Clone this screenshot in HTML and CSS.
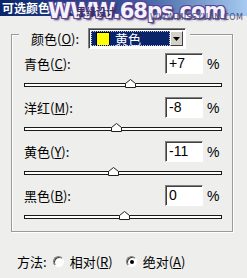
FILE: index.html
```html
<!DOCTYPE html>
<html>
<head>
<meta charset="utf-8">
<link rel="stylesheet" href="styles.css">
</head>
<body>
<div class="window">
  <div class="titlebar"><span class="title">可选颜色选项</span></div>
  <div class="wm wm-big">WWW.68ps.com</div>
  <div class="wm wm-cn">思缘设计</div>
  <div class="wm wm-small">WWW.MISSYUAN.COM</div>

  <div class="group">
    <div class="legend">
      <span class="lbl legend-lbl">颜色(<u>O</u>):</span>
      <div class="combo">
        <div class="combo-sel"><span class="swatch"></span><span class="combo-text">黄色</span></div>
        <div class="combo-btn"><svg width="7" height="4" viewBox="0 0 7 4"><polygon points="0,0 7,0 3.5,4" fill="#000"/></svg></div>
      </div>
    </div>

    <div class="row">
      <div class="line"><span class="lbl">青色(<u>C</u>):</span><span class="field">+7</span><span class="pct">%</span></div>
      <div class="track"><svg class="thumb" style="left:100px" width="11" height="9" viewBox="0 0 11 9"><polygon points="0.5,8.5 0.5,4.5 5.5,0.5 10.5,4.5 10.5,8.5" fill="#fff" stroke="#222"/></svg></div>
    </div>
    <div class="row">
      <div class="line"><span class="lbl">洋红(<u>M</u>):</span><span class="field">-8</span><span class="pct">%</span></div>
      <div class="track"><svg class="thumb" style="left:86px" width="11" height="9" viewBox="0 0 11 9"><polygon points="0.5,8.5 0.5,4.5 5.5,0.5 10.5,4.5 10.5,8.5" fill="#fff" stroke="#222"/></svg></div>
    </div>
    <div class="row">
      <div class="line"><span class="lbl">黄色(<u>Y</u>):</span><span class="field">-11</span><span class="pct">%</span></div>
      <div class="track"><svg class="thumb" style="left:83px" width="11" height="9" viewBox="0 0 11 9"><polygon points="0.5,8.5 0.5,4.5 5.5,0.5 10.5,4.5 10.5,8.5" fill="#fff" stroke="#222"/></svg></div>
    </div>
    <div class="row">
      <div class="line"><span class="lbl">黑色(<u>B</u>):</span><span class="field">0</span><span class="pct">%</span></div>
      <div class="track"><svg class="thumb" style="left:94px" width="11" height="9" viewBox="0 0 11 9"><polygon points="0.5,8.5 0.5,4.5 5.5,0.5 10.5,4.5 10.5,8.5" fill="#fff" stroke="#222"/></svg></div>
    </div>
  </div>

  <div class="method">
    <span class="lbl m-title">方法:</span>
    <span class="radio"></span><span class="lbl m-rel">相对(<u>R</u>)</span>
    <span class="radio checked"></span><span class="lbl">绝对(<u>A</u>)</span>
  </div>
</div>
</body>
</html>
```

FILE: styles.css
```css
html, body {
  margin: 0;
  padding: 0;
  background: #eeeeec;
}
.window {
  position: relative;
  width: 247px;
  height: 278px;
  overflow: hidden;
  background: #eeeeec;
  font-family: "Noto Sans CJK SC", "Liberation Sans", sans-serif;
  font-size: 13px;
  color: #000;
}
.titlebar {
  height: 16px;
  background: linear-gradient(to right, #0a246a 0%, #3a5a9c 55%, #a6caf0 100%);
  display: flex;
  align-items: center;
  padding-left: 2px;
}
.title {
  color: #fff;
  font-weight: bold;
  font-size: 12px;
  line-height: 16px;
}
.wm {
  position: absolute;
  white-space: nowrap;
}
.wm-big {
  left: 48px;
  top: -1px;
  font-family: "DejaVu Sans", sans-serif;
  font-weight: bold;
  font-size: 21px;
  line-height: 24px;
  color: #f4f2fa;
  text-shadow: 1px 1px 0 #5b4496, -1px -1px 0 #5b4496, 1px -1px 0 #5b4496, -1px 1px 0 #5b4496, 2px 2px 2px #3b2a70;
  letter-spacing: -1px;
}
.wm-cn {
  left: 76px;
  top: 6px;
  font-size: 10px;
  line-height: 12px;
  color: #3b2f6a;
  font-weight: bold;
}
.wm-small {
  left: 150px;
  top: 13px;
  font-family: "DejaVu Sans", sans-serif;
  font-size: 8px;
  line-height: 9px;
  color: #4a4f7a;
  letter-spacing: 0.3px;
}
.group {
  margin: 18px 0 0 11px;
  width: 222px;
  height: 198px;
  border: 1px solid #9a9a9a;
  box-shadow: 1px 1px 0 #fff, inset 1px 1px 0 #fff;
  box-sizing: border-box;
}
.legend {
  display: flex;
  align-items: center;
  margin: -7px 0 0 7px;
  width: 171px;
  height: 21px;
  background: #eeeeec;
}
.legend-lbl {
  margin-left: 12px;
  width: 57px;
}
.lbl {
  line-height: 15px;
  white-space: nowrap;
}
.lbl u {
  text-decoration: underline;
  text-underline-offset: 1px;
}
.combo {
  display: flex;
  width: 98px;
  height: 21px;
  box-sizing: border-box;
  border-top: 1px solid #808080;
  border-left: 1px solid #808080;
  border-right: 1px solid #fff;
  border-bottom: 1px solid #fff;
  box-shadow: inset 1px 1px 0 #404040;
  background: #fff;
  padding: 2px;
}
.combo-sel {
  flex: 1;
  display: flex;
  align-items: center;
  background: #0a246a;
  outline: 1px dotted #c0c8e0;
  outline-offset: -1px;
}
.swatch {
  width: 12px;
  height: 12px;
  margin-left: 5px;
  background: #ffff00;
  border: 1px solid #000;
}
.combo-text {
  color: #fff;
  margin-left: 5px;
  line-height: 15px;
}
.combo-btn {
  width: 13px;
  height: 15px;
  background: #d4d0c8;
  box-sizing: border-box;
  border-top: 1px solid #fff;
  border-left: 1px solid #fff;
  border-right: 1px solid #404040;
  border-bottom: 1px solid #404040;
  display: flex;
  align-items: center;
  justify-content: center;
}
.row {
  margin-left: 12px;
  margin-top: 4px;
  width: 198px;
}
.row + .row {
  margin-top: 10px;
}
.line {
  display: flex;
  align-items: center;
  height: 21px;
}
.line .lbl {
  flex: 1;
}
.field {
  width: 38px;
  height: 21px;
  box-sizing: border-box;
  background: #fff;
  border-top: 1px solid #808080;
  border-left: 1px solid #808080;
  border-right: 1px solid #fff;
  border-bottom: 1px solid #fff;
  box-shadow: inset 1px 1px 0 #404040;
  padding-left: 3px;
  line-height: 19px;
  font-family: "Liberation Sans", sans-serif;
  font-size: 14px;
}
.pct {
  width: 15px;
  margin-left: 4px;
  font-family: "Liberation Sans", sans-serif;
  font-size: 14px;
}
.track {
  position: relative;
  margin-top: 9px;
  width: 198px;
  height: 4px;
  box-sizing: border-box;
  background: #fff;
  border: 1px solid #1a1a1a;
}
.thumb {
  position: absolute;
  bottom: -2px;
  display: block;
}
.method {
  display: flex;
  align-items: center;
  margin: 22px 0 0 17px;
  height: 15px;
}
.m-title {
  margin-right: 6px;
}
.m-rel {
  margin-right: 13px;
}
.radio {
  width: 11px;
  height: 11px;
  border-radius: 50%;
  box-sizing: border-box;
  background: #fff;
  border: 1px solid;
  border-color: #808080 #fff #fff #808080;
  box-shadow: inset 1px 1px 0 #404040;
  margin-right: 6px;
  position: relative;
}
.radio.checked::after {
  content: "";
  position: absolute;
  left: 3px;
  top: 3px;
  width: 4px;
  height: 4px;
  border-radius: 50%;
  background: #000;
}
```
